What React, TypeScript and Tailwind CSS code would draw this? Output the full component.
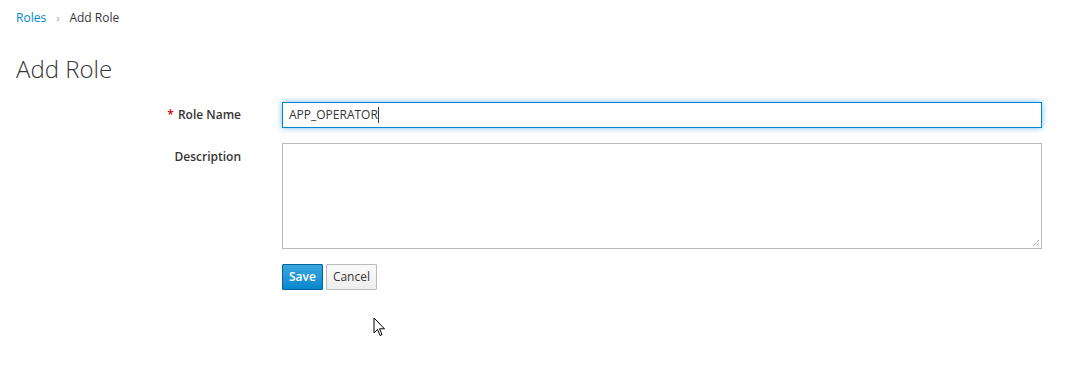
import React from 'react';

export default function App() {
  return (
    <div className="relative w-[1090px] h-[374px] bg-white text-[#363636] font-['Open_Sans','Liberation_Sans',sans-serif] text-[12px] overflow-hidden">
      {/* Breadcrumb */}
      <div className="pl-4 pt-[13px] flex items-center h-[22px] leading-[18px]">
        <a className="text-[#0088ce]">Roles</a>
        <span className="mx-[10px] text-[#9c9c9c] text-[11px]">&#8250;</span>
        <span>Add Role</span>
      </div>

      {/* Title */}
      <h1 className="pl-4 mt-[32px] text-[24px] font-light leading-[30px] text-[#363636]">Add Role</h1>

      {/* Form */}
      <div className="mt-[18px] grid grid-cols-[242px_760px] gap-x-[40px] gap-y-[15px]">
        <label className="flex items-center justify-end h-[26px] font-semibold pr-px">
          <span className="text-[#c00] mr-[4px]">*</span>Role Name
        </label>
        <div className="h-[26px] border border-[#0088ce] shadow-[0_0_6px_rgba(0,136,206,0.55)] bg-white flex items-center px-[6px]">
          <span className="text-[12px]">APP_OPERATOR</span>
          <span className="w-px h-[16px] bg-[#363636]" />
        </div>

        <label className="flex justify-end pt-[5px] font-semibold pr-px">Description</label>
        <div className="relative h-[106px] border border-[#bbb] bg-white">
          <svg className="absolute right-[1px] bottom-[1px]" width="9" height="9" viewBox="0 0 9 9">
            <path d="M8 2 L2 8 M8 5 L5 8" stroke="#777" strokeWidth="1" strokeDasharray="1 1" />
          </svg>
        </div>

        <div />
        <div className="flex gap-[3px]">
          <button className="h-[26px] px-[6px] border border-[#00659c] bg-gradient-to-b from-[#39a5dc] to-[#0088ce] text-white font-semibold rounded-[1px]">
            Save
          </button>
          <button className="h-[26px] px-[6px] border border-[#bbb] bg-gradient-to-b from-[#fafafa] to-[#ededed] text-[#363636] rounded-[1px]">
            Cancel
          </button>
        </div>
      </div>

      {/* Mouse cursor */}
      <svg className="absolute left-[373px] top-[317px]" width="14" height="21" viewBox="0 0 14 21">
        <path d="M1 1 L1 16 L4.5 12.5 L7 18.5 L9 17.5 L6.5 11.8 L11.5 11.8 Z" fill="white" stroke="#000" strokeWidth="1" strokeLinejoin="miter" />
      </svg>
    </div>
  );
}
